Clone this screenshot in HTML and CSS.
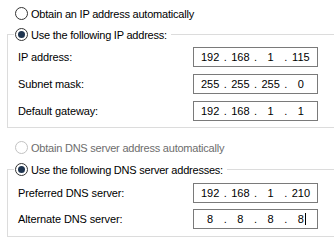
FILE: index.html
```html
<!DOCTYPE html>
<html>
<head>
<meta charset="utf-8">
<link rel="stylesheet" href="styles.css">
</head>
<body>
<div class="panel">
  <div class="option"><span class="radio"></span><span class="text">Obtain an IP address automatically</span></div>
  <fieldset class="group group-ip">
    <legend class="legend"><span class="radio checked"></span><span class="text">Use the following IP address:</span></legend>
    <div class="rows rows-ip">
      <span class="label">IP address:</span>
      <div class="ipbox"><span>192</span><span class="dot">.</span><span>168</span><span class="dot">.</span><span>1</span><span class="dot">.</span><span>115</span></div>
      <span class="label">Subnet mask:</span>
      <div class="ipbox"><span>255</span><span class="dot">.</span><span>255</span><span class="dot">.</span><span>255</span><span class="dot">.</span><span>0</span></div>
      <span class="label">Default gateway:</span>
      <div class="ipbox"><span>192</span><span class="dot">.</span><span>168</span><span class="dot">.</span><span>1</span><span class="dot">.</span><span>1</span></div>
    </div>
  </fieldset>
  <div class="option option-dns disabled"><span class="radio"></span><span class="text">Obtain DNS server address automatically</span></div>
  <fieldset class="group group-dns">
    <legend class="legend"><span class="radio checked"></span><span class="text">Use the following DNS server addresses:</span></legend>
    <div class="rows rows-dns">
      <span class="label">Preferred DNS server:</span>
      <div class="ipbox"><span>192</span><span class="dot">.</span><span>168</span><span class="dot">.</span><span>1</span><span class="dot">.</span><span>210</span></div>
      <span class="label">Alternate DNS server:</span>
      <div class="ipbox"><span>8</span><span class="dot">.</span><span>8</span><span class="dot">.</span><span>8</span><span class="dot">.</span><span>8<span class="caret"></span></span></div>
    </div>
  </fieldset>
</div>
</body>
</html>
```
FILE: styles.css
```css
html, body {
  margin: 0;
  background: #ffffff;
}
body {
  font-family: "Liberation Sans", Arial, sans-serif;
  font-size: 11px;
  color: #000000;
}
.panel {
  width: 334px;
  height: 245px;
  overflow: hidden;
  padding-top: 7px;
  box-sizing: border-box;
}
.option {
  display: flex;
  align-items: center;
  gap: 3px;
  height: 13px;
  padding-left: 15px;
}
.text {
  letter-spacing: -0.22px;
}
.label {
  letter-spacing: -0.12px;
}
.option-dns {
  margin-top: 13px;
}
.option.disabled {
  color: #6d6d6d;
}
.option.disabled .radio {
  border-color: #c2c2c2;
}
.radio {
  flex: none;
  width: 13px;
  height: 13px;
  box-sizing: border-box;
  border: 1px solid #333333;
  border-radius: 50%;
  background: #ffffff;
  display: flex;
  align-items: center;
  justify-content: center;
}
.radio.checked::after {
  content: "";
  width: 7px;
  height: 7px;
  border-radius: 50%;
  background: #1f3550;
}
.group {
  margin: 8px 0 0 7px;
  padding: 6px 0;
  border: 1px solid #dcdcdc;
  width: 345px;
  box-sizing: border-box;
  min-inline-size: 0;
}
.group-dns {
  margin-top: 9px;
  padding: 7px 0;
}
.legend {
  display: flex;
  align-items: center;
  gap: 3px;
  height: 13px;
  margin-left: 6px;
  padding: 0 4px 0 1px;
  background: #ffffff;
}
.rows {
  display: grid;
  grid-template-columns: 175px 125px;
  align-items: center;
  row-gap: 7px;
  padding-left: 10px;
}
.rows-dns {
  row-gap: 6px;
}
.ipbox {
  height: 20px;
  box-sizing: border-box;
  border: 1px solid #7a7a7a;
  padding: 0 3px;
  display: grid;
  grid-template-columns: 1fr 4px 1fr 4px 1fr 4px 1fr;
  align-items: center;
  text-align: center;
}
.dot {
  text-align: center;
}
.caret {
  display: inline-block;
  width: 1px;
  height: 12px;
  background: #000000;
  margin-left: 1px;
  margin-right: -2px;
  vertical-align: -2px;
}
```
